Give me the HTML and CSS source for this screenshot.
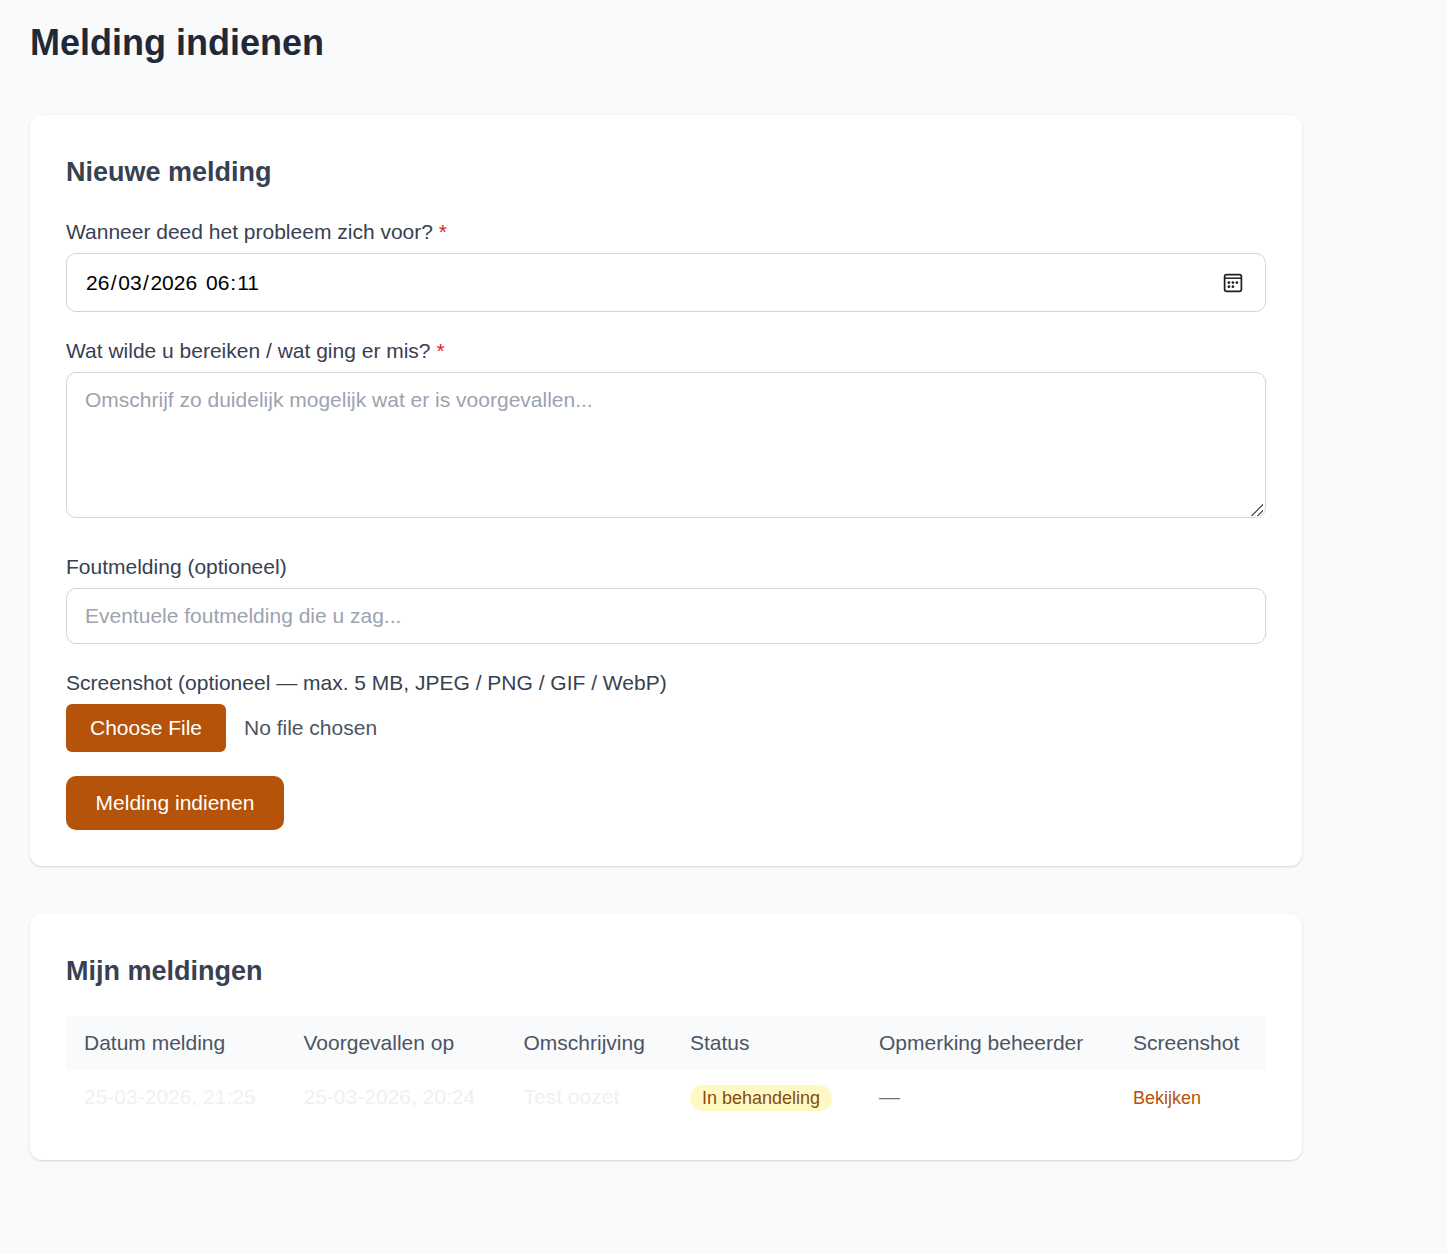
FILE: index.html
```html
<!DOCTYPE html>
<html lang="nl">
<head>
<meta charset="utf-8">
<title>Melding indienen</title>
<link rel="stylesheet" href="styles.css">
</head>
<body>
<main class="page">
  <h1 class="page-title">Melding indienen</h1>
  <section class="card card-form">
    <h2 class="card-title">Nieuwe melding</h2>
    <form class="form">
      <div class="field">
        <label class="label" for="when">Wanneer deed het probleem zich voor? <span class="req">*</span></label>
        <div class="control control-date" id="when" role="textbox" tabindex="0">
          <span class="date-value"><span class="seg">26</span><span class="sep">/</span><span class="seg">03</span><span class="sep">/</span><span class="seg">2026</span><span class="gap"> </span><span class="seg">06</span>:<span class="seg">11</span></span>
          <svg class="date-icon" width="20" height="20" viewBox="0 0 20 20" aria-hidden="true">
            <rect x="1.6" y="1.6" width="16.8" height="16.8" rx="2.2" fill="none" stroke="#1f1f1f" stroke-width="1.7"/>
            <path d="M2 5.2h16" stroke="#1f1f1f" stroke-width="1.5" fill="none"/>
            <g fill="#1f1f1f">
              <circle cx="5.9" cy="9.6" r="1.35"/>
              <circle cx="9.9" cy="9.6" r="1.35"/>
              <circle cx="13.9" cy="9.6" r="1.35"/>
              <circle cx="5.9" cy="13.7" r="1.35"/>
              <circle cx="9.9" cy="13.7" r="1.35"/>
            </g>
          </svg>
        </div>
      </div>
      <div class="field field-area">
        <label class="label" for="what">Wat wilde u bereiken / wat ging er mis? <span class="req">*</span></label>
        <textarea class="control control-area" id="what" placeholder="Omschrijf zo duidelijk mogelijk wat er is voorgevallen..."></textarea>
      </div>
      <div class="field">
        <label class="label" for="err">Foutmelding (optioneel)</label>
        <input class="control control-text" id="err" type="text" placeholder="Eventuele foutmelding die u zag...">
      </div>
      <div class="field">
        <label class="label" for="shot">Screenshot (optioneel — max. 5 MB, JPEG / PNG / GIF / WebP)</label>
        <input class="file" id="shot" type="file">
      </div>
      <button class="submit" type="button">Melding indienen</button>
    </form>
  </section>
  <section class="card card-list">
    <h2 class="card-title">Mijn meldingen</h2>
    <table class="table">
      <thead>
        <tr>
          <th class="col-date">Datum melding</th>
          <th class="col-occurred">Voorgevallen op</th>
          <th class="col-desc">Omschrijving</th>
          <th class="col-status">Status</th>
          <th class="col-note">Opmerking beheerder</th>
          <th class="col-shot">Screenshot</th>
        </tr>
      </thead>
      <tbody>
        <tr>
          <td>25-03-2026, 21:25</td>
          <td>25-03-2026, 20:24</td>
          <td>Test oozet</td>
          <td class="cell-badge"><span class="badge">In behandeling</span></td>
          <td class="muted">—</td>
          <td class="cell-link"><a class="link" href="#">Bekijken</a></td>
        </tr>
      </tbody>
    </table>
  </section>
</main>
</body>
</html>
```

FILE: styles.css
```css
* { box-sizing: border-box; }
html, body { margin: 0; }
body {
  background: #f9fafb;
  font-family: "Liberation Sans", Arial, sans-serif;
  color: #374151;
  min-height: 1254px;
}
.page { width: 1332px; padding: 20px 30px 0; }
.page-title {
  margin: 0 0 50px;
  font-size: 36px;
  line-height: 45px;
  font-weight: 700;
  color: #1f2937;
}
.card {
  background: #fff;
  border-radius: 12px;
  padding: 36px;
  box-shadow: 0 1px 3px rgba(0,0,0,.1), 0 1px 2px rgba(0,0,0,.06);
}
.card-form { margin-bottom: 48px; }
.card-title {
  margin: 0 0 24px;
  font-size: 27px;
  line-height: 42px;
  font-weight: 700;
  color: #374151;
}
.form { display: flex; flex-direction: column; }
.field { display: flex; flex-direction: column; margin-bottom: 24px; }
.field-area { margin-bottom: 34px; }
.label { font-size: 21px; line-height: 30px; color: #374151; margin-bottom: 6px; }
.req { color: #dc2626; }
.control {
  display: block;
  width: 100%;
  background: #fff;
  border: 1px solid #d1d5db;
  border-radius: 10px;
  font: 21px/28px "Liberation Sans", Arial, sans-serif;
  padding: 13px 18px;
  color: #111;
}
.control::placeholder { color: #9ca3af; }
.control-date {
  display: flex;
  align-items: center;
  justify-content: space-between;
  height: 59px;
  color: #000;
  padding-right: 22px;
}
.date-value { white-space: pre; }
.seg { padding: 0 1px; }
.sep { padding: 0 .5px; }
.gap { padding-right: 1px; }
.date-icon { display: block; flex: none; }
.control-area { height: 146px; resize: vertical; }
.control-area::-webkit-resizer {
  background: linear-gradient(135deg, transparent 0 47%, #666 47% 55%, transparent 55% 72%, #666 72% 80%, transparent 80%) no-repeat right 2px bottom 1px / 12px 12px;
}
.control-text { height: 56px; }
.file {
  display: block;
  font: 21px/28px "Liberation Sans", Arial, sans-serif;
  color: #4b5563;
  height: 48px;
}
.file::file-selector-button {
  background: #b45309;
  color: #fff;
  border: 0;
  border-radius: 6px;
  font: 21px/28px "Liberation Sans", Arial, sans-serif;
  height: 48px;
  width: 160px;
  margin-right: 18px;
}
.submit {
  align-self: flex-start;
  background: #b45309;
  color: #fff;
  border: 0;
  border-radius: 10px;
  font: 21px/28px "Liberation Sans", Arial, sans-serif;
  width: 218px;
  height: 54px;
}
.table { width: 100%; border-collapse: collapse; font-size: 21px; table-layout: fixed; }
.col-date { width: 219.5px; }
.col-occurred { width: 220px; }
.col-desc { width: 166.5px; }
.col-status { width: 189px; }
.col-note { width: 254px; }
.col-shot { width: 151px; }
.table th {
  background: #f9fafb;
  color: #4b5563;
  font-weight: 400;
  text-align: left;
  padding: 12px 18px;
  line-height: 30px;
  white-space: nowrap;
}
.table td {
  padding: 12px 18px;
  color: #f0f0f0;
  line-height: 30px;
  white-space: nowrap;
  height: 54px;
}
.table td.muted { color: #6b7280; }
.table td.cell-badge { font-size: 18px; }
.table td.cell-link { font-size: 18px; padding-top: 13px; padding-bottom: 11px; }
.badge {
  display: inline-block;
  vertical-align: middle;
  background: #fef9c3;
  color: #854d0e;
  border-radius: 999px;
  font-size: 18px;
  line-height: 26px;
  padding: 0 12px;
}
.link { color: #b45309; text-decoration: none; font-size: 18px; }
```
